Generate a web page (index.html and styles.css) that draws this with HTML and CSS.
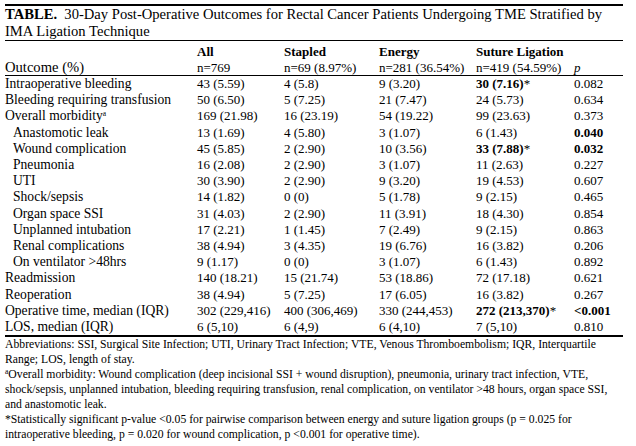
FILE: index.html
```html
<!DOCTYPE html>
<html>
<head>
<meta charset="utf-8">
<link rel="stylesheet" href="styles.css">
</head>
<body>
<div class="page">
  <div class="title"><b>TABLE.</b>&nbsp; 30-Day Post-Operative Outcomes for Rectal Cancer Patients Undergoing TME Stratified by IMA Ligation Technique</div>
  <table class="tbl">
    <colgroup>
      <col class="c-out"><col class="c-all"><col class="c-sta"><col class="c-ene"><col class="c-sut"><col class="c-p">
    </colgroup>
    <thead>
      <tr class="h1"><th></th><th>All</th><th>Stapled</th><th>Energy</th><th>Suture Ligation</th><th></th></tr>
      <tr class="h2"><td class="outcome">Outcome (%)</td><td>n=769</td><td>n=69 (8.97%)</td><td>n=281 (36.54%)</td><td>n=419 (54.59%)</td><td><i>p</i></td></tr>
    </thead>
    <tbody>
      <tr><td class="lbl">Intraoperative bleeding</td><td>43 (5.59)</td><td>4 (5.8)</td><td>9 (3.20)</td><td><b>30 (7.16)</b>*</td><td>0.082</td></tr>
      <tr><td class="lbl">Bleeding requiring transfusion</td><td>50 (6.50)</td><td>5 (7.25)</td><td>21 (7.47)</td><td>24 (5.73)</td><td>0.634</td></tr>
      <tr><td class="lbl">Overall morbidity<sup>a</sup></td><td>169 (21.98)</td><td>16 (23.19)</td><td>54 (19.22)</td><td>99 (23.63)</td><td>0.373</td></tr>
      <tr><td class="lbl sub">Anastomotic leak</td><td>13 (1.69)</td><td>4 (5.80)</td><td>3 (1.07)</td><td>6 (1.43)</td><td><b>0.040</b></td></tr>
      <tr><td class="lbl sub">Wound complication</td><td>45 (5.85)</td><td>2 (2.90)</td><td>10 (3.56)</td><td><b>33 (7.88)</b>*</td><td><b>0.032</b></td></tr>
      <tr><td class="lbl sub">Pneumonia</td><td>16 (2.08)</td><td>2 (2.90)</td><td>3 (1.07)</td><td>11 (2.63)</td><td>0.227</td></tr>
      <tr><td class="lbl sub">UTI</td><td>30 (3.90)</td><td>2 (2.90)</td><td>9 (3.20)</td><td>19 (4.53)</td><td>0.607</td></tr>
      <tr><td class="lbl sub">Shock/sepsis</td><td>14 (1.82)</td><td>0 (0)</td><td>5 (1.78)</td><td>9 (2.15)</td><td>0.465</td></tr>
      <tr><td class="lbl sub">Organ space SSI</td><td>31 (4.03)</td><td>2 (2.90)</td><td>11 (3.91)</td><td>18 (4.30)</td><td>0.854</td></tr>
      <tr><td class="lbl sub">Unplanned intubation</td><td>17 (2.21)</td><td>1 (1.45)</td><td>7 (2.49)</td><td>9 (2.15)</td><td>0.863</td></tr>
      <tr><td class="lbl sub">Renal complications</td><td>38 (4.94)</td><td>3 (4.35)</td><td>19 (6.76)</td><td>16 (3.82)</td><td>0.206</td></tr>
      <tr><td class="lbl sub">On ventilator &gt;48hrs</td><td>9 (1.17)</td><td>0 (0)</td><td>3 (1.07)</td><td>6 (1.43)</td><td>0.892</td></tr>
      <tr><td class="lbl">Readmission</td><td>140 (18.21)</td><td>15 (21.74)</td><td>53 (18.86)</td><td>72 (17.18)</td><td>0.621</td></tr>
      <tr><td class="lbl">Reoperation</td><td>38 (4.94)</td><td>5 (7.25)</td><td>17 (6.05)</td><td>16 (3.82)</td><td>0.267</td></tr>
      <tr><td class="lbl">Operative time, median (IQR)</td><td>302 (229,416)</td><td>400 (306,469)</td><td>330 (244,453)</td><td><b>272 (213,370)</b>*</td><td><b>&lt;0.001</b></td></tr>
      <tr><td class="lbl">LOS, median (IQR)</td><td>6 (5,10)</td><td>6 (4,9)</td><td>6 (4,10)</td><td>7 (5,10)</td><td>0.810</td></tr>
    </tbody>
  </table>
  <div class="notes">
    <p>Abbreviations: SSI, Surgical Site Infection; UTI, Urinary Tract Infection; VTE, Venous Thromboembolism; IQR, Interquartile<br>Range; LOS, length of stay.</p>
    <p><sup>a</sup>Overall morbidity: Wound complication (deep incisional SSI + wound disruption), pneumonia, urinary tract infection, VTE,<br>shock/sepsis, unplanned intubation, bleeding requiring transfusion, renal complication, on ventilator &gt;48 hours, organ space SSI,<br>and anastomotic leak.</p>
    <p>*Statistically significant p-value &lt;0.05 for pairwise comparison between energy and suture ligation groups (p = 0.025 for<br>intraoperative bleeding, p = 0.020 for wound complication, p &lt;0.001 for operative time).</p>
  </div>
</div>
</body>
</html>
```

FILE: styles.css
```css
html, body {
  margin: 0;
  padding: 0;
  background: #ffffff;
}
body {
  font-family: "Liberation Serif", "Times New Roman", serif;
  color: #000000;
}
.page {
  width: 618px;
  padding: 4px 0 0 5px;
}
.title {
  border-top: 2px solid #000;
  border-bottom: 1px solid #000;
  font-size: 14.6px;
  line-height: 17px;
  padding: 0;
}
.tbl {
  width: 618px;
  border-collapse: collapse;
  font-size: 13px;
  table-layout: fixed;
}
.c-out { width: 192px; }
.c-all { width: 87px; }
.c-sta { width: 95px; }
.c-ene { width: 97px; }
.c-sut { width: 98px; }
.c-p { width: 49px; }
.tbl th, .tbl td {
  padding: 0;
  text-align: left;
  vertical-align: middle;
  white-space: nowrap;
  line-height: 16.2px;
}
.tbl th {
  font-weight: bold;
  line-height: 16px;
  padding-top: 3px;
}
.h2 td {
  line-height: 15px;
  border-bottom: 1px solid #000;
}
.h2 .outcome {
  font-size: 14.6px;
}
.tbl td.lbl {
  font-size: 13.6px;
}
.tbl tbody tr:last-child td {
  border-bottom: 2px solid #000;
}
.tbl td.sub {
  padding-left: 8px;
}
sup {
  font-size: 7.5px;
  line-height: 0;
  vertical-align: 4px;
}
.notes {
  font-size: 11.7px;
  line-height: 15px;
  white-space: nowrap;
}
.notes p {
  margin: 0;
}
```
